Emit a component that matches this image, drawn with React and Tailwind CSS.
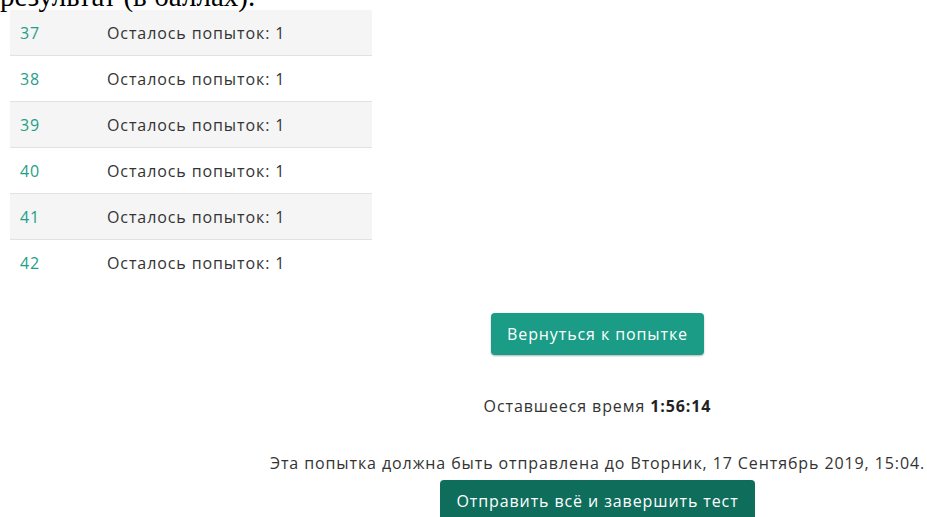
const rows = [37, 38, 39, 40, 41, 42];

function AttemptRow({ num, shaded, last }) {
  return (
    <div
      className={`flex h-[46px] items-center ${shaded ? "bg-[#f5f5f5]" : "bg-white"} ${
        last ? "" : "border-b border-[#e2e2e2]"
      }`}
    >
      <span className="w-[97px] pl-[10px] text-[#1f9e88]">{num}</span>
      <span className="text-[#333]">Осталось попыток: 1</span>
    </div>
  );
}

export default function App() {
  return (
    <div className="h-[517px] w-[927px] overflow-hidden bg-white font-['Open_Sans',sans-serif] text-[16px] tracking-[0.9px]">
      <div className="flow-root h-[10px]">
        <p className="mt-[-19px] font-['Liberation_Serif',serif] text-[29px] leading-[30px] tracking-normal text-black">
          результат (в баллах).
        </p>
      </div>

      <div className="ml-[10px] w-[362px]">
        {rows.map((n, i) => (
          <AttemptRow key={n} num={n} shaded={i % 2 === 0} last={i === rows.length - 1} />
        ))}
      </div>

      <div className="ml-[268px] flex flex-col items-center pt-[27px]">
        <button className="h-[42px] rounded-[4px] bg-[#1a9c86] px-[16px] text-white shadow-[0_1px_2px_rgba(0,0,0,0.3)]">
          Вернуться к попытке
        </button>
        <p className="mt-[39px] text-[#333]">
          Оставшееся время <b className="font-bold text-[#222]">1:56:14</b>
        </p>
        <p className="mt-[33px] text-[#333]">
          Эта попытка должна быть отправлена до Вторник, 17 Сентябрь 2019, 15:04.
        </p>
        <button className="mt-[5px] h-[42px] rounded-[4px] bg-[#0f6d5b] px-[16px] text-white">
          Отправить всё и завершить тест
        </button>
      </div>
    </div>
  );
}
